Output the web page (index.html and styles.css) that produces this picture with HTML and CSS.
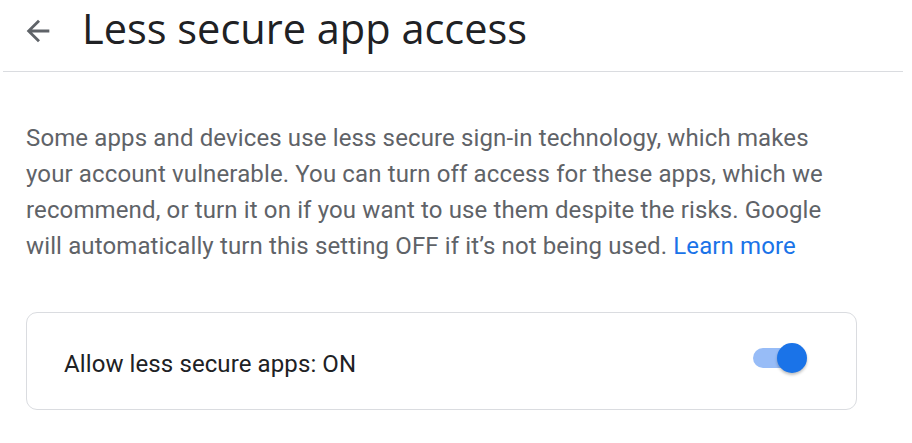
FILE: index.html
```html
<!DOCTYPE html>
<html lang="en">
<head>
<meta charset="utf-8">
<title>Less secure app access</title>
<link rel="stylesheet" href="styles.css">
</head>
<body>
<header class="top-bar">
  <button class="back-btn" aria-label="Back">
    <svg viewBox="0 0 24 24" width="34" height="34" aria-hidden="true"><path d="M20 11H7.83l5.59-5.59L12 4l-8 8 8 8 1.41-1.41L7.83 13H20v-2z" fill="#5f6368"/></svg>
  </button>
  <h1 class="title">Less secure app access</h1>
</header>
<main class="content">
  <p class="description">Some apps and devices use less secure sign-in technology, which makes your account vulnerable. You can turn off access for these apps, which we recommend, or turn it on if you want to use them despite the risks. Google will automatically turn this setting OFF if it’s not being used. <a class="link" href="#">Learn more</a></p>
  <div class="setting-card">
    <span class="setting-label">Allow less secure apps: ON</span>
    <span class="switch" role="switch" aria-checked="true">
      <span class="switch-track"></span>
      <span class="switch-thumb"></span>
    </span>
  </div>
</main>
</body>
</html>
```
FILE: styles.css
```css
* { box-sizing: border-box; }
html, body { margin: 0; padding: 0; background: #fff; }
body { font-family: Roboto, "Liberation Sans", Arial, sans-serif; color: #202124; }

.top-bar {
  display: flex;
  align-items: flex-start;
  width: 900px;
  height: 72px;
  margin-left: 3px;
  padding-left: 18px;
  border-bottom: 1px solid #dadce0;
}
.back-btn {
  display: flex;
  width: 34px;
  height: 34px;
  padding: 0;
  margin-top: 14px;
  border: 0;
  background: none;
}
.title {
  margin: 4px 0 0 27px;
  font-family: "Open Sans", Roboto, sans-serif;
  font-weight: 400;
  font-size: 41.5px;
  line-height: 48px;
  color: #202124;
}

.content {
  padding: 48px 0 0 26px;
  width: 857px;
}
.description {
  margin: 0;
  font-size: 24px;
  letter-spacing: 0.13px;
  line-height: 36px;
  color: #5f6368;
}
.link { color: #1a73e8; text-decoration: none; }

.setting-card {
  display: flex;
  align-items: center;
  justify-content: space-between;
  height: 98px;
  margin-top: 48px;
  padding: 6px 49px 0 37px;
  border: 1px solid #dadce0;
  border-radius: 11px;
}
.setting-label {
  font-size: 24px;
  letter-spacing: 0.1px;
  color: #202124;
}
.switch {
  position: relative;
  width: 54px;
  height: 30px;
  margin-bottom: 12px;
}
.switch-track {
  position: absolute;
  left: 0;
  top: 5px;
  width: 49px;
  height: 20px;
  border-radius: 10px;
  background: #97bcf7;
}
.switch-thumb {
  position: absolute;
  right: 0;
  top: 0;
  width: 30px;
  height: 30px;
  border-radius: 50%;
  background: #1a73e8;
  box-shadow: 0 2px 3px rgba(0,0,0,0.25);
}
```
